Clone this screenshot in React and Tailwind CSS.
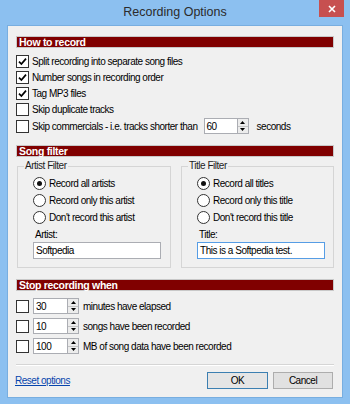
import { useState } from "react";

function Check({ on }) {
  return (
    <span className="flex h-[13px] w-[13px] shrink-0 items-center justify-center border border-[#333] bg-white">
      {on && (
        <svg width="9" height="9" viewBox="0 0 9 9">
          <path d="M1 4.6 L3.4 7 L8 1.6" fill="none" stroke="#000" strokeWidth="1.7" />
        </svg>
      )}
    </span>
  );
}

function Radio({ on, label }) {
  return (
    <div className="flex h-[17px] items-center gap-[3px]">
      <span className="flex h-[13px] w-[13px] shrink-0 items-center justify-center rounded-full border border-[#333] bg-white">
        {on && <span className="h-[5px] w-[5px] rounded-full bg-[#111]" />}
      </span>
      <span>{label}</span>
    </div>
  );
}

function Bar({ children }) {
  return (
    <div className="flex h-3 items-center border border-[#c8c8c8] bg-[#800000] pl-[2px] text-[10.5px] font-bold leading-none tracking-[-0.3px] text-white">
      {children}
    </div>
  );
}

function Spin({ value, w }) {
  return (
    <div className={`flex h-4 shrink-0 border border-[#abadb3] bg-white ${w}`}>
      <span className="flex flex-1 items-center pl-[2px]">{value}</span>
      <div className="flex w-[11px] flex-col border-l border-[#abadb3] bg-[#ececec]">
        <span className="flex flex-1 items-center justify-center border-b border-[#c4c4c4]">
          <svg width="5" height="3" viewBox="0 0 5 3"><path d="M0 3 L2.5 0 L5 3Z" fill="#000" /></svg>
        </span>
        <span className="flex flex-1 items-center justify-center">
          <svg width="5" height="3" viewBox="0 0 5 3"><path d="M0 0 L2.5 3 L5 0Z" fill="#000" /></svg>
        </span>
      </div>
    </div>
  );
}

function Group({ title, options, label, value, focused, w }) {
  const [sel] = useState(0);
  return (
    <fieldset className={`border border-[#d5d5d5] pb-[8px] pl-[15px] ${w}`}>
      {/* legend sits inside the padding, so pull it back toward the corner */}
      <legend className="-ml-[9px] px-[1px] leading-[12px] text-[#1e1e1e]">{title}</legend>
      <div className="flex flex-col pt-[3px]">
        {options.map((o, i) => (
          <Radio key={o} on={i === sel} label={o} />
        ))}
      </div>
      <div className="ml-[2px] mt-[3px] h-3 leading-[12px]">{label}</div>
      <div
        className={`mt-px flex h-[17px] w-[128px] items-center border bg-white pl-[2px] ${
          focused ? "border-[#569de5]" : "border-[#abadb3]"
        }`}
      >
        {value}
      </div>
    </fieldset>
  );
}

export default function App() {
  const how = [
    ["Split recording into separate song files", true],
    ["Number songs in recording order", true],
    ["Tag MP3 files", true],
    ["Skip duplicate tracks", false],
  ];
  const stops = [
    ["30", "minutes have elapsed"],
    ["10", "songs have been recorded"],
    ["100", "MB of song data have been recorded"],
  ];

  return (
    <div className="h-[404px] w-[350px] overflow-hidden whitespace-nowrap bg-[#8cc0f0] font-['Liberation_Sans',Arial,sans-serif] text-[10px] tracking-[-0.48px] text-black">
      {/* title bar */}
      <div className="relative flex h-[25px] items-center justify-center">
        <span className="text-[12.5px] tracking-normal text-[#2b2b2b]">Recording Options</span>
        <div className="absolute right-[6px] top-0 flex h-[17px] w-[25px] items-center justify-center bg-[#c75050]">
          <svg width="8" height="8" viewBox="0 0 8 8">
            <path d="M1 1 L7 7 M7 1 L1 7" stroke="#fff" strokeWidth="1.6" />
          </svg>
        </div>
      </div>

      {/* client area */}
      <div className="mx-[7px] h-[373px] border border-[#78aee0] bg-[#f0f0f0] px-[8px] pt-[10px]">
        <Bar>How to record</Bar>
        <div className="mt-[5px] flex flex-col">
          {how.map(([t, on]) => (
            <div key={t} className="flex h-[16.25px] items-center gap-[3px]">
              <Check on={on} />
              <span>{t}</span>
            </div>
          ))}
          <div className="flex h-[16.25px] items-center gap-[3px]">
            <Check on={false} />
            <span>Skip commercials - i.e. tracks shorter than</span>
            <div className="ml-[3px]">
              <Spin value="60" w="w-[45px]" />
            </div>
            <span className="ml-[5px]">seconds</span>
          </div>
        </div>

        <div className="mt-[10.75px]">
          <Bar>Song filter</Bar>
        </div>
        <div className="mt-[3px] flex gap-[10px] pl-px">
          <Group
            w="w-[155px]"
            title="Artist Filter"
            options={["Record all artists", "Record only this artist", "Don't record this artist"]}
            label="Artist:"
            value="Softpedia"
          />
          <Group
            w="w-[154px]"
            title="Title Filter"
            options={["Record all titles", "Record only this title", "Don't record this title"]}
            label="Title:"
            value="This is a Softpedia test."
            focused
          />
        </div>

        <div className="mt-[11px]">
          <Bar>Stop recording when</Bar>
        </div>
        <div className="mt-[7px] flex flex-col gap-1">
          {stops.map(([v, t]) => (
            <div key={t} className="flex h-4 items-center gap-1">
              <Check on={false} />
              <Spin value={v} w="w-[46px]" />
              <span>{t}</span>
            </div>
          ))}
        </div>

        <div className="mt-[10px] h-px bg-[#d5d5d5]" />
        <div className="h-px bg-white" />

        <div className="mt-[6px] flex items-center justify-between pr-px">
          <a href="#" className="-ml-px text-[#0645ad] underline">Reset options</a>
          <div className="flex gap-[5px]">
            <button className="flex h-[17px] w-[61px] items-center justify-center border border-[#3c7fb1] bg-[#e5e5e5]">
              OK
            </button>
            <button className="flex h-[17px] w-[60px] items-center justify-center border border-[#adadad] bg-[#e1e1e1]">
              Cancel
            </button>
          </div>
        </div>
      </div>
    </div>
  );
}
